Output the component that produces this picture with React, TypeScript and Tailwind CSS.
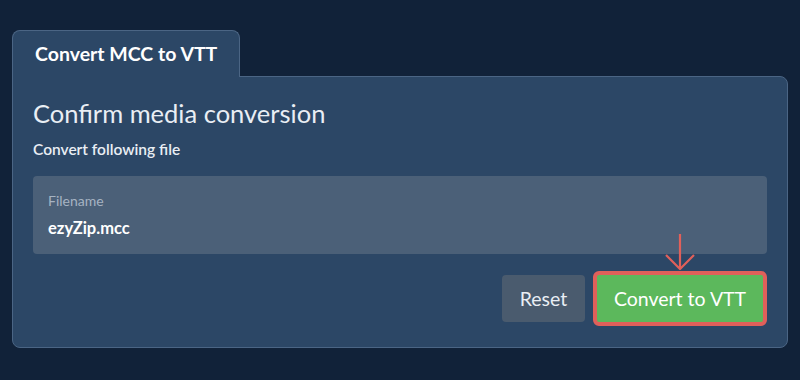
export default function App() {
  return (
    <div
      className="w-[800px] h-[380px] bg-[#112239] px-3 pt-[30px]"
      style={{ fontFamily: "Lato, 'Noto Sans', sans-serif" }}
    >
      <div className="flex">
        <div className="h-[47px] px-[22px] flex items-center bg-[#2c4766] border border-b-0 border-[#4b6584] rounded-t-lg text-white text-[19.5px] font-bold relative z-10 -mb-px">
          Convert MCC to VTT
        </div>
      </div>
      <div className="bg-[#2c4766] border border-[#4b6584] rounded-b-lg rounded-tr-lg px-5 pt-5 pb-[21px]">
        <h1 className="text-[25.5px] leading-8 text-[#e9eef4]">Confirm media conversion</h1>
        <p className="mt-[10px] text-[15.5px] leading-5 font-semibold text-[#e9eef4]">Convert following file</p>
        <div className="mt-[17px] h-[78px] bg-[#4b6078] rounded px-[15px] pt-[17px]">
          <div className="text-[14px] leading-4 text-[#a6b3c2]">Filename</div>
          <div className="mt-[9px] text-[16.5px] leading-5 font-bold text-white">ezyZip.mcc</div>
        </div>
        <div className="mt-[17px] flex justify-end items-center gap-2">
          <button className="h-[47px] w-[83px] rounded bg-[#4a5b6e] text-[19.5px] text-[#e9eef4]">Reset</button>
          <div className="relative">
            <svg
              className="absolute left-1/2 -translate-x-1/2 -top-[37px]"
              width="32"
              height="36"
              viewBox="0 0 32 36"
              fill="none"
              stroke="#e0605a"
              strokeWidth="2.2"
            >
              <path d="M16 0 V35 M2 21 L16 35 L30 21" />
            </svg>
            <button className="h-[55px] w-[174px] rounded-md border-4 border-[#e0605a] bg-[#5cb85c] text-[19.5px] text-white">
              Convert to VTT
            </button>
          </div>
        </div>
      </div>
    </div>
  );
}
